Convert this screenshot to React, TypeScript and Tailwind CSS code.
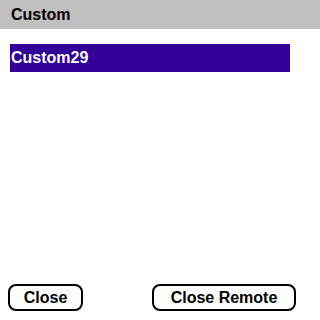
import React from 'react';

export default function App() {
  return (
    <div className="w-[320px] h-[320px] bg-white flex flex-col font-['Liberation_Sans',sans-serif] font-bold text-black">
      <div className="h-[29px] bg-[#c0c0c0] flex items-center pl-[11px] text-[16px] leading-none">
        Custom
      </div>

      <div className="pt-[15px] px-[10px]">
        <div className="w-[280px] h-[28px] bg-[#330099] text-white text-[16px] leading-none flex items-center pl-[1px]">
          Custom29
        </div>
      </div>

      <div className="mt-auto mb-[9px] flex items-center pl-[8px]">
        <button className="w-[75px] h-[27px] border-2 border-black rounded-[8px] text-[16px] leading-none flex items-center justify-center">
          Close
        </button>
        <button className="ml-[69px] w-[144px] h-[27px] border-2 border-black rounded-[8px] text-[16px] leading-none flex items-center justify-center">
          Close Remote
        </button>
      </div>
    </div>
  );
}
